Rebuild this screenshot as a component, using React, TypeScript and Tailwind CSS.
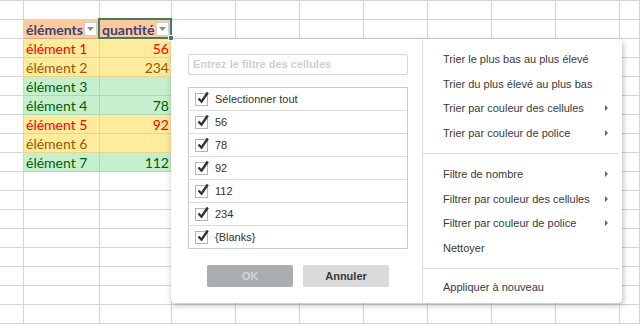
import React from 'react';

type Tone = 'red' | 'brown' | 'green';

const rows: { label: string; qty: string; tone: Tone }[] = [
    { label: 'élément 1', qty: '56', tone: 'red' },
    { label: 'élément 2', qty: '234', tone: 'brown' },
    { label: 'élément 3', qty: '', tone: 'green' },
    { label: 'élément 4', qty: '78', tone: 'green' },
    { label: 'élément 5', qty: '92', tone: 'red' },
    { label: 'élément 6', qty: '', tone: 'brown' },
    { label: 'élément 7', qty: '112', tone: 'green' },
];

const toneClass: Record<Tone, string> = {
    red: 'bg-[#ffeb9c] text-[#ff0000] border-[#e8d68c]',
    brown: 'bg-[#ffeb9c] text-[#9c5700] border-[#e8d68c]',
    green: 'bg-[#c6efce] text-[#006100] border-[#a9dab4]',
};

const values = ['Sélectionner tout', '56', '78', '92', '112', '234', '{Blanks}', ''];

const sortItems = [
    { text: 'Trier le plus bas au plus élevé', sub: false },
    { text: 'Trier du plus élevé au plus bas', sub: false },
    { text: 'Trier par couleur des cellules', sub: true },
    { text: 'Trier par couleur de police', sub: true },
];

const filterItems = [
    { text: 'Filtre de nombre', sub: true },
    { text: 'Filtrer par couleur des cellules', sub: true },
    { text: 'Filtrer par couleur de police', sub: true },
    { text: 'Nettoyer', sub: false },
];

const DropButton = () => (
    <div className="w-[13px] h-[14px] bg-white border border-[#cfcfcf] flex items-center justify-center shrink-0">
        <svg width="7" height="4" viewBox="0 0 7 4">
            <path d="M0 0h7L3.5 4z" fill="#8c8c8c" />
        </svg>
    </div>
);

const CheckBox = () => (
    <div className="w-[13px] h-[13px] border border-[#b5b5b5] bg-white relative shrink-0">
        <svg className="absolute -top-[3px] left-[1px]" width="12" height="13" viewBox="0 0 12 13">
            <path d="M1.5 7.5l3 3.2L10.8 1.5" fill="none" stroke="#333" strokeWidth="2.4" />
        </svg>
    </div>
);

const MenuItem = ({ text, sub }: { text: string; sub: boolean }) => (
    <div className="h-[24.5px] flex items-center justify-between pl-[20px] pr-[11px] text-[11px] text-[#3a3a3a]">
        <span>{text}</span>
        {sub && (
            <svg width="3" height="6" viewBox="0 0 3 6">
                <path d="M0 0l3 3-3 3z" fill="#666" />
            </svg>
        )}
    </div>
);

export default function App() {
    const cols = 11;
    const sheetRows = 17;

    const cell = (r: number, c: number) => {
        const base = 'h-[19px] border-r border-b overflow-hidden flex items-center';
        if (r === 1 && (c === 1 || c === 2)) {
            return (
                <div key={`${r}-${c}`} className={`${base} bg-[#fccb9c] border-[#d8ad85] text-[#3f3f76] font-bold pl-[2px] pr-[2px] justify-between`}>
                    <span>{c === 1 ? 'éléments' : 'quantité'}</span>
                    <DropButton />
                </div>
            );
        }
        if (r >= 2 && r <= 8 && (c === 1 || c === 2)) {
            const row = rows[r - 2];
            return (
                <div key={`${r}-${c}`} className={`${base} ${toneClass[row.tone]} ${c === 2 ? 'justify-end pr-[2px]' : 'pl-[2px]'}`}>
                    {c === 1 ? row.label : row.qty}
                </div>
            );
        }
        return <div key={`${r}-${c}`} className={`${base} border-[#d4d4d4]`} />;
    };

    return (
        <div className="relative w-[640px] h-[324px] overflow-hidden bg-white font-['Liberation_Sans',Arial,sans-serif]">
            {/* sheet grid */}
            <div className="grid grid-cols-[24px_76px_72px_64px_64px_64px_64px_64px_64px_64px_20px] border-t border-[#d4d4d4] text-[14px] font-['Lato',sans-serif]">
                {Array.from({ length: sheetRows }, (_, r) =>
                    Array.from({ length: cols }, (_, c) => cell(r, c))
                )}
            </div>

            {/* selection around quantité */}
            <div className="absolute left-[98px] top-[18px] w-[74px] h-[21px] border-2 border-[#4b7b5c] pointer-events-none">
                <div className="absolute -right-[4px] -bottom-[4px] w-[6px] h-[6px] bg-[#4b7b5c] border border-white" />
            </div>

            {/* filter popup */}
            <div className="absolute left-[171px] top-[39px] w-[451px] h-[264px] bg-white rounded-[4px] shadow-[1px_2px_6px_rgba(0,0,0,0.28)] flex">
                <div className="w-[252px] border-r border-[#dcdcdc] pl-[17px] pr-[14px] pt-[15px] flex flex-col">
                    <div className="h-[21px] border border-[#d6d6d6] rounded-[2px] flex items-center pl-[4px] text-[11px] font-bold text-[#cfcfcf]">
                        Entrez le filtre des cellules
                    </div>
                    <div className="mt-[12px] h-[162px] border border-[#cccccc] overflow-hidden">
                        {values.map((v, i) => (
                            <div key={i} className="h-[23px] border-b border-[#dcdcdc] flex items-center pl-[6px] gap-[7px] text-[11px] text-[#333]">
                                {v && <CheckBox />}
                                <span>{v}</span>
                            </div>
                        ))}
                    </div>
                    <div className="mt-[16px] flex gap-[10px] pl-[19px]">
                        <div className="w-[86px] h-[22px] bg-[#a9adb0] rounded-[2px] flex items-center justify-center text-[11px] font-bold text-[#d3d6d8]">
                            OK
                        </div>
                        <div className="w-[86px] h-[22px] bg-[#d9dadb] rounded-[2px] flex items-center justify-center text-[11px] font-bold text-[#3a3a3a]">
                            Annuler
                        </div>
                    </div>
                </div>
                <div className="flex-1 pt-[8px] pr-[3px]">
                    {sortItems.map((it) => (
                        <MenuItem key={it.text} {...it} />
                    ))}
                    <div className="my-[8px] h-px bg-[#dcdcdc]" />
                    {filterItems.map((it) => (
                        <MenuItem key={it.text} {...it} />
                    ))}
                    <div className="mt-[8px] mb-[6px] h-px bg-[#dcdcdc]" />
                    <MenuItem text="Appliquer à nouveau" sub={false} />
                </div>
            </div>
        </div>
    );
}
